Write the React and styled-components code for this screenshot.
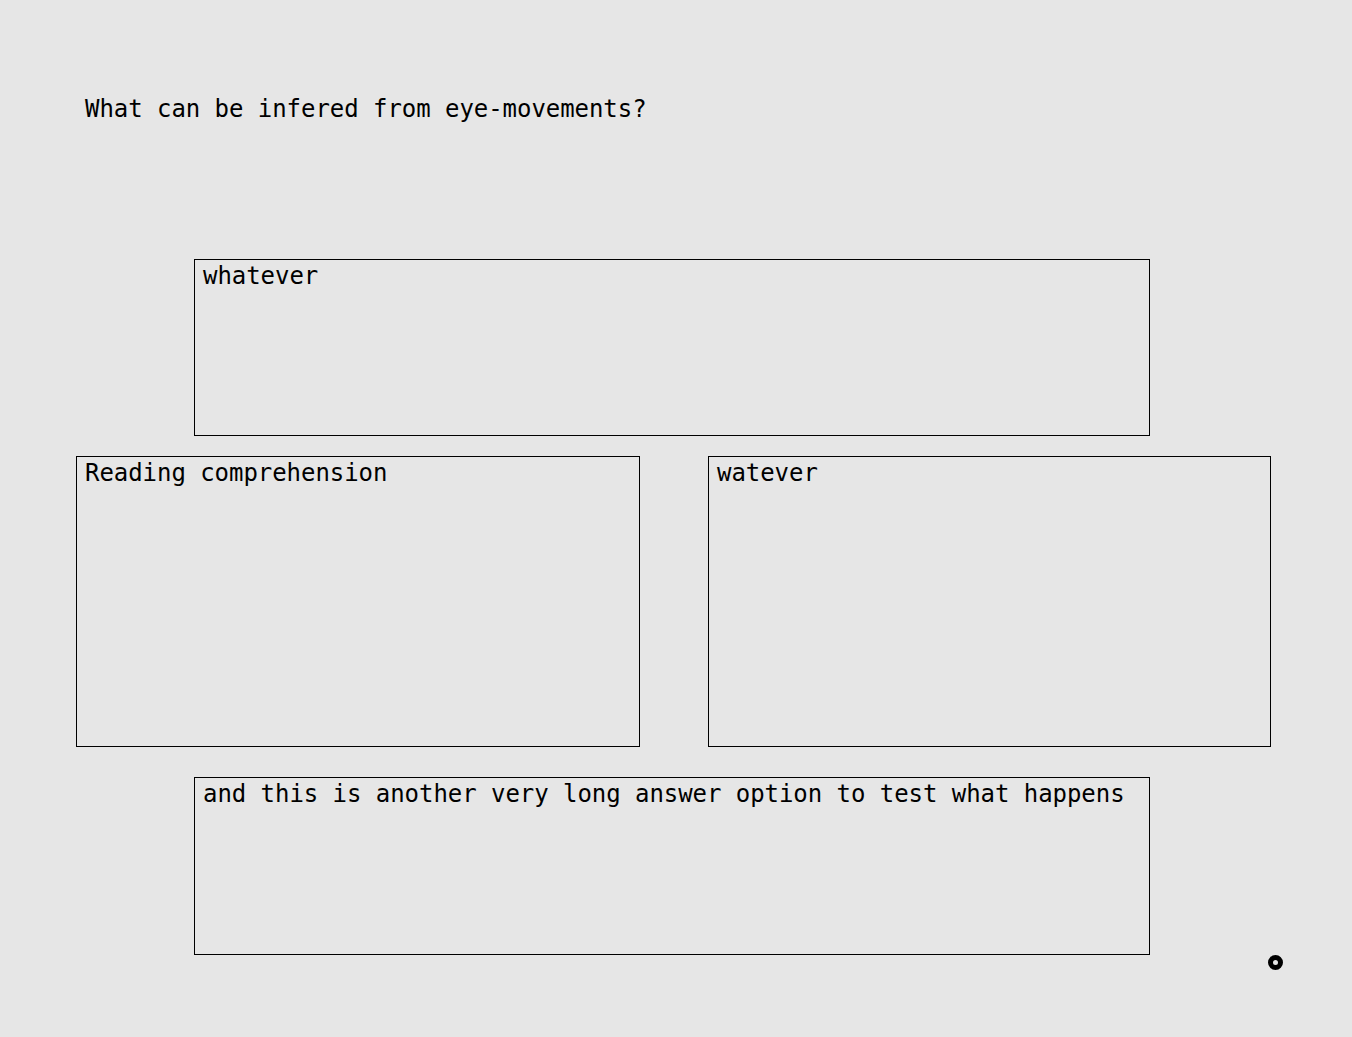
import React from "react";
import styled, { createGlobalStyle } from "styled-components";

const Global = createGlobalStyle`
  html, body { margin: 0; padding: 0; background: #e6e6e6; }
  body { font-family: "DejaVu Sans Mono", "Liberation Mono", monospace; color: #000; }
`;

const Page = styled.div`
  position: relative;
  width: 1352px;
  height: 1037px;
  background: #e6e6e6;
  box-sizing: border-box;
  padding: 95px 0 0 76px;
`;

const Question = styled.h1`
  margin: 0 0 136px 9px;
  font-size: 24px;
  font-weight: normal;
  line-height: 28px;
  letter-spacing: -0.05px;
`;

const Options = styled.div`
  width: 1195px;
  display: flex;
  flex-direction: column;
`;

const Row = styled.div`
  display: flex;
  gap: 68px;
  margin: ${(p) => p.$mt}px 0 0 0;
`;

const Option = styled.div`
  box-sizing: border-box;
  width: ${(p) => p.$w}px;
  height: ${(p) => p.$h}px;
  margin-left: ${(p) => p.$ml || 0}px;
  margin-top: ${(p) => p.$mt || 0}px;
  border: 1px solid #000;
  padding: 2px 8px;
  font-size: 24px;
  line-height: 28px;
  white-space: nowrap;
  letter-spacing: -0.05px;
`;

const Cursor = styled.div`
  position: absolute;
  left: 1268px;
  top: 955px;
  width: 15px;
  height: 15px;
  box-sizing: border-box;
  border-radius: 50%;
  border: 5px solid #000;
  background: #e6e6e6;
`;

export default function App() {
  return (
    <>
      <Global />
      <Page>
        <Question>What can be infered from eye-movements?</Question>
        <Options>
          <Option $w={956} $h={177} $ml={118}>whatever</Option>
          <Row $mt={20}>
            <Option $w={564} $h={291}>Reading comprehension</Option>
            <Option $w={563} $h={291}>watever</Option>
          </Row>
          <Option $w={956} $h={178} $ml={118} $mt={30}>
            and this is another very long answer option to test what happens
          </Option>
        </Options>
        <Cursor />
      </Page>
    </>
  );
}
